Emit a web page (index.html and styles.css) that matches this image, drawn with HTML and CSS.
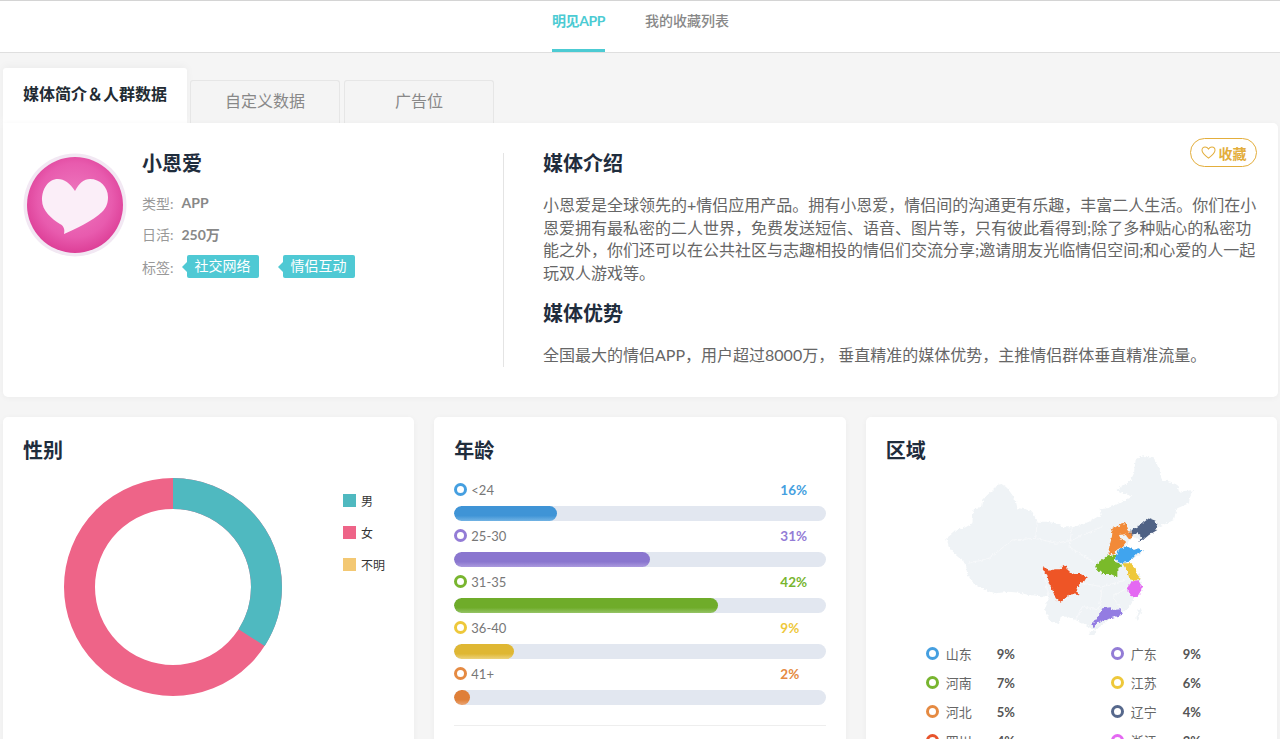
FILE: index.html
```html
<!DOCTYPE html>
<html lang="en">
<head>
    <meta charset="UTF-8">
    <meta name="viewport" content="width=device-width, initial-scale=1.0">
    <title>明见APP</title>
    <link rel="stylesheet" href="styles.css">
</head>
<body>

    <div class="topnav">
        <a class="topnav-item active">明见APP</a>
        <a class="topnav-item">我的收藏列表</a>
    </div>

    <div class="page">
        <div class="tabs">
            <div class="tab active">媒体简介＆人群数据</div>
            <div class="tab tab-custom">自定义数据</div>
            <div class="tab tab-ads">广告位</div>
        </div>

        <div class="media-card">
            <div class="media-info">
                <svg class="avatar" viewBox="0 0 104 104">
                    <defs>
                        <radialGradient id="avatarBg" cx="50%" cy="45%" r="55%">
                            <stop offset="0%" stop-color="#ee7cc0"/>
                            <stop offset="70%" stop-color="#e85bae"/>
                            <stop offset="100%" stop-color="#dd3f97"/>
                        </radialGradient>
                    </defs>
                    <circle cx="52" cy="52" r="51.5" fill="#f2e8f3"/>
                    <circle cx="52" cy="52" r="48" fill="url(#avatarBg)"/>
                    <path d="M52 38 C47 30 41 26 35 26 C25 26 19 36 19 47 C19 58 29 66 37 71 C41 73 42 77 41 81 C52 76 70 68 79 59 C84 54 85 49 85 44 C85 34 77 26 67 26 C61 26 56 30 52 38 Z" fill="#fbeef8"/>
                </svg>
                <div class="media-meta">
                    <h2 class="media-name">小恩爱</h2>
                    <div class="meta-row"><span class="meta-label">类型:</span><strong>APP</strong></div>
                    <div class="meta-row"><span class="meta-label">日活:</span><strong>250万</strong></div>
                    <div class="meta-row meta-tags">
                        <span class="meta-label">标签:</span>
                        <span class="tag">社交网络</span>
                        <span class="tag">情侣互动</span>
                    </div>
                </div>
            </div>
            <div class="media-desc">
                <h2>媒体介绍</h2>
                <p>小恩爱是全球领先的+情侣应用产品。拥有小恩爱，情侣间的沟通更有乐趣，丰富二人生活。你们在小恩爱拥有最私密的二人世界，免费发送短信、语音、图片等，只有彼此看得到;除了多种贴心的私密功能之外，你们还可以在公共社区与志趣相投的情侣们交流分享;邀请朋友光临情侣空间;和心爱的人一起玩双人游戏等。</p>
                <h2>媒体优势</h2>
                <p>全国最大的情侣APP，用户超过8000万， 垂直精准的媒体优势，主推情侣群体垂直精准流量。</p>
            </div>
            <a class="fav-btn">
                <svg viewBox="0 0 16 14" width="15" height="13"><path d="M8 13 C4 10 1 7.500 1 4.500 C1 2.500 2.500 1 4.300 1 C5.800 1 7.200 1.900 8 3.200 C8.800 1.900 10.200 1 11.700 1 C13.500 1 15 2.500 15 4.500 C15 7.500 12 10 8 13 Z" fill="none" stroke="#e3ae3c" stroke-width="1.100"/></svg>
                收藏
            </a>
        </div>

        <div class="stats">
            <div class="stat-card">
                <h3>性别</h3>
                <div class="gender">
                    <svg class="donut" viewBox="0 0 220 220">
                        <circle cx="110" cy="110" r="93.500" fill="none" stroke="#ee6488" stroke-width="31"/>
                        <circle cx="110" cy="110" r="93.500" fill="none" stroke="#4fb9c0" stroke-width="31" stroke-dasharray="200 587.500" transform="rotate(-90 110 110)"/>
                    </svg>
                    <ul class="gender-legend">
                        <li><i class="swatch swatch-male"></i>男</li>
                        <li><i class="swatch swatch-female"></i>女</li>
                        <li><i class="swatch swatch-unknown"></i>不明</li>
                    </ul>
                </div>
            </div>

            <div class="stat-card">
                <h3>年龄</h3>
                <div class="age-list">
                    <div class="age-row age-blue">
                        <div class="age-head"><i class="ring"></i><span class="age-name">&lt;24</span><b>16%</b></div>
                        <div class="bar"><div class="bar-fill" style="width: 103px"></div></div>
                    </div>
                    <div class="age-row age-purple">
                        <div class="age-head"><i class="ring"></i><span class="age-name">25-30</span><b>31%</b></div>
                        <div class="bar"><div class="bar-fill" style="width: 196px"></div></div>
                    </div>
                    <div class="age-row age-green">
                        <div class="age-head"><i class="ring"></i><span class="age-name">31-35</span><b>42%</b></div>
                        <div class="bar"><div class="bar-fill" style="width: 264px"></div></div>
                    </div>
                    <div class="age-row age-yellow">
                        <div class="age-head"><i class="ring"></i><span class="age-name">36-40</span><b>9%</b></div>
                        <div class="bar"><div class="bar-fill" style="width: 60px"></div></div>
                    </div>
                    <div class="age-row age-orange">
                        <div class="age-head"><i class="ring"></i><span class="age-name">41+</span><b>2%</b></div>
                        <div class="bar"><div class="bar-fill" style="width: 16px"></div></div>
                    </div>
                </div>
                <div class="age-line"></div>
            </div>

            <div class="stat-card">
                <h3>区域</h3>
                <svg class="map" viewBox="0 0 1230 585">
                    <defs>
                        <filter id="rough" x="-5%" y="-5%" width="110%" height="110%">
                            <feTurbulence type="fractalNoise" baseFrequency="0.12" numOctaves="2" seed="4"/>
                            <feDisplacementMap in="SourceGraphic" scale="12" xChannelSelector="R" yChannelSelector="G"/>
                        </filter>
                    </defs>
                    <g filter="url(#rough)">
                        <path fill="#eff3f6" d="M232 295 L245 285 L262 270 L290 262 L310 250 L312 225 L315 205 L340 200 L342 180 L352 168 L378 145 L385 135 L398 132 L415 145 L430 165 L440 180 L445 205 L470 208 L490 215 L505 245 L535 245 L560 250 L585 262 L610 262 L635 255 L660 245 L695 225 L692 208 L715 205 L740 195 L770 180 L790 170 L760 158 L742 150 L765 135 L785 120 L795 100 L798 75 L800 60 L815 50 L830 48 L850 55 L860 60 L870 90 L880 120 L905 125 L925 135 L930 155 L972 150 L962 175 L960 190 L925 205 L918 225 L915 240 L860 265 L830 290 L815 300 L790 290 L770 320 L825 335 L770 370 L790 380 L815 410 L820 450 L800 470 L785 495 L770 510 L755 525 L725 535 L700 555 L680 570 L650 555 L620 540 L595 530 L575 530 L570 552 L545 545 L525 510 L540 470 L510 468 L480 465 L450 458 L420 455 L380 460 L355 452 L330 440 L310 425 L295 405 L290 370 L260 345 L240 320 Z"/>
                        <path fill="#eff3f6" d="M812 503 L818 510 L806 542 L799 535 Z M658 578 L670 570 L682 574 L676 585 L660 585 Z"/>
                        <path fill="none" stroke="#fafbfc" stroke-width="2" d="M295 370 L360 355 L430 300 L500 295 L560 310 L610 300 M500 295 L505 245 M610 262 L600 320 L640 345 L680 372 M540 470 L520 385 M640 430 L700 440 L770 420 M700 440 L690 510 M620 540 L640 500 L690 510 M760 510 L730 470 L773 445 M610 300 L700 260"/>
                        <path fill="#ee5426" d="M520 380 L532 385 L538 392 L558 388 L572 388 L583 375 L595 385 L602 398 L618 402 L635 402 L653 412 L645 425 L632 432 L622 442 L628 465 L610 463 L600 465 L588 475 L575 488 L560 475 L550 450 L540 430 L535 405 L525 395 Z"/>
                        <path fill="#7aba2a" d="M680 373 L718 345 L738 348 L738 365 L760 375 L745 387 L745 412 L725 402 L700 402 L685 390 Z"/>
                        <path fill="#f28a38" d="M725 265 L745 260 L760 248 L772 252 L778 270 L792 287 L780 298 L768 283 L750 285 L755 298 L772 305 L760 320 L742 330 L738 345 L718 340 L722 315 L728 295 L730 280 Z"/>
                        <path fill="#40a4ee" d="M738 355 L750 328 L772 318 L795 330 L808 325 L825 332 L805 340 L782 365 L750 370 Z"/>
                        <path fill="#506285" d="M785 270 L805 260 L820 250 L840 235 L860 242 L865 270 L840 285 L822 300 L810 305 L818 290 L805 280 L785 285 Z"/>
                        <path fill="#eec83a" d="M760 370 L785 370 L800 385 L805 405 L815 415 L800 422 L782 418 L775 395 Z"/>
                        <path fill="#e468f2" d="M785 425 L810 420 L820 445 L805 470 L790 472 L775 450 Z"/>
                        <path fill="#937ce2" d="M700 505 L725 502 L732 510 L755 508 L758 525 L735 532 L700 542 L682 552 L675 565 L670 552 L690 525 Z"/>
                    </g>
                </svg>
                <ul class="region-list">
                    <li><i class="ring ring-blue"></i><span>山东</span><b>9%</b></li>
                    <li><i class="ring ring-purple"></i><span>广东</span><b>9%</b></li>
                    <li><i class="ring ring-green"></i><span>河南</span><b>7%</b></li>
                    <li><i class="ring ring-yellow"></i><span>江苏</span><b>6%</b></li>
                    <li><i class="ring ring-orange"></i><span>河北</span><b>5%</b></li>
                    <li><i class="ring ring-navy"></i><span>辽宁</span><b>4%</b></li>
                    <li><i class="ring ring-red"></i><span>四川</span><b>4%</b></li>
                    <li><i class="ring ring-pink"></i><span>浙江</span><b>3%</b></li>
                </ul>
            </div>
        </div>
    </div>

</body>
</html>
```

FILE: styles.css
```css
html, body {
    margin: 0;
    height: 739px;
    overflow: hidden;
}
body {
    font-family: Lato, "Noto Sans CJK SC", sans-serif;
    background-color: #f5f5f5;
    color: #666;
}
h2, h3, p, ul {
    margin: 0;
    padding: 0;
}
ul {
    list-style-type: none;
}
i {
    display: block;
    flex: none;
}

.topnav {
    display: flex;
    justify-content: center;
    gap: 41px;
    height: 51px;
    background-color: #fff;
    border-top: 1px solid #d4d4d4;
    border-bottom: 1px solid #dfdfdf;
}
.topnav-item {
    font-size: 14px;
    font-weight: 500;
    line-height: 39px;
    color: #888;
    margin-right: -1px;
}
.topnav-item.active {
    font-weight: 700;
    letter-spacing: -0.400px;
    color: #4ccbd3;
    border-bottom: 3px solid #4ccbd3;
    height: 48px;
}

.page {
    padding: 15px 2px 0 3px;
}

.tabs {
    display: flex;
    align-items: flex-end;
    height: 55px;
}
.tab {
    box-sizing: border-box;
    width: 150px;
    height: 43px;
    font-size: 16px;
    line-height: 40px;
    text-align: center;
    color: #888;
    background-color: #f4f4f4;
    border: 1px solid #e6e6e6;
    border-bottom: 0;
    border-radius: 3px 3px 0 0;
}
.tab.active {
    width: 184px;
    height: 55px;
    font-weight: 700;
    line-height: 52px;
    color: #222b33;
    background-color: #fff;
    border: 0;
    box-shadow: 0 -2px 8px rgba(0, 0, 0, 0.04);
}
.tab-custom {
    margin-left: 3px;
}
.tab-ads {
    margin-left: 4px;
}

.media-card {
    position: relative;
    display: flex;
    height: 274px;
    background-color: #fff;
    border-radius: 0 5px 5px 5px;
    box-shadow: 0 1px 6px rgba(0, 0, 0, 0.04);
}
.media-info {
    display: flex;
    box-sizing: border-box;
    width: 501px;
    height: 214px;
    margin-top: 30px;
    padding-left: 20px;
    border-right: 1px solid #e4e4e4;
}
.avatar {
    width: 104px;
    height: 104px;
    flex: none;
}
.media-meta {
    margin-left: 15px;
}
.media-name {
    font-size: 20px;
    font-weight: 700;
    line-height: 24px;
    color: #1f2d3d;
    margin-bottom: 12px;
    margin-top: -2px;
}
.meta-row {
    display: flex;
    align-items: center;
    height: 31px;
    font-size: 14px;
    color: #888;
}
.meta-label {
    margin-right: 8px;
    color: #999;
}
.meta-tags {
    margin-top: 2px;
}
.meta-tags .meta-label {
    margin-right: 13px;
}
.tag {
    position: relative;
    height: 23px;
    padding: 0 8px;
    margin-right: 24px;
    line-height: 22px;
    color: #fff;
    background-color: #4fc9d4;
    border-radius: 2px;
}
.tag::before {
    content: "";
    position: absolute;
    left: -5px;
    top: 7px;
    border-top: 5px solid transparent;
    border-bottom: 5px solid transparent;
    border-right: 5px solid #4fc9d4;
}

.media-desc {
    flex: 1;
    padding: 26px 20px 0 39px;
}
.media-desc h2 {
    font-size: 20px;
    font-weight: 700;
    line-height: 29px;
    color: #1f2d3d;
}
.media-desc p {
    font-size: 16px;
    line-height: 22.700px;
    margin: 16px 0 14px;
}

.fav-btn {
    position: absolute;
    top: 15px;
    right: 21px;
    display: flex;
    align-items: center;
    justify-content: center;
    gap: 3px;
    box-sizing: border-box;
    width: 67px;
    height: 29px;
    font-size: 14px;
    font-weight: 700;
    color: #e3ae3c;
    border: 1px solid #e3ae3c;
    border-radius: 15px;
}

.stats {
    display: grid;
    grid-template-columns: repeat(3, minmax(0, 1fr));
    gap: 20px;
    margin: 20px 1px 0 0;
}
.stat-card {
    height: 400px;
    padding: 20px;
    box-sizing: border-box;
    background-color: #fff;
    border-radius: 5px;
    box-shadow: 0 1px 6px rgba(0, 0, 0, 0.04);
}
.stat-card h3 {
    font-size: 20px;
    font-weight: 700;
    line-height: 26px;
    color: #1f2d3d;
}

.gender {
    position: relative;
    padding-top: 14px;
}
.donut {
    display: block;
    width: 220px;
    height: 220px;
    margin-left: 40px;
}
.gender-legend {
    position: absolute;
    top: 21px;
    left: 320px;
    font-size: 12px;
    color: #333;
}
.gender-legend li {
    display: flex;
    align-items: center;
    gap: 5px;
    height: 32px;
}
.swatch {
    width: 13px;
    height: 13px;
}
.swatch-male {
    background-color: #4fb9c0;
}
.swatch-female {
    background-color: #ee6488;
}
.swatch-unknown {
    background-color: #f3c873;
}

.ring {
    box-sizing: border-box;
    width: 13px;
    height: 13px;
    border: 3px solid #999;
    border-radius: 50%;
}
.ring-blue { border-color: #459fe0; }
.ring-purple { border-color: #937cd6; }
.ring-green { border-color: #78b52f; }
.ring-yellow { border-color: #eec83a; }
.ring-orange { border-color: #e58a42; }
.ring-navy { border-color: #56688c; }
.ring-red { border-color: #e8542c; }
.ring-pink { border-color: #e468f2; }

.age-list {
    margin-top: 12px;
}
.age-row {
    height: 46px;
}
.age-head {
    display: flex;
    align-items: center;
    box-sizing: border-box;
    height: 31px;
    padding-bottom: 2px;
    font-size: 13px;
}
.age-name {
    margin-left: 4px;
    color: #777;
}
.age-head b {
    position: absolute;
    margin-left: 326px;
    font-size: 13.500px;
}
.bar {
    height: 15px;
    background-color: #e2e7f0;
    border-radius: 8px;
    overflow: hidden;
}
.bar-fill {
    height: 100%;
    border-radius: 8px;
}
.age-blue .ring { border-color: #459fe0; }
.age-blue b { color: #459fe0; }
.age-blue .bar-fill { background: linear-gradient(#3f94d6 65%, #72b3e4); }
.age-purple .ring { border-color: #937cd6; }
.age-purple b { color: #937cd6; }
.age-purple .bar-fill { background: linear-gradient(#8a76cf 65%, #ab9ade); }
.age-green .ring { border-color: #78b52f; }
.age-green b { color: #78b52f; }
.age-green .bar-fill { background: linear-gradient(#6fac2a 65%, #95c466); }
.age-yellow .ring { border-color: #eec83a; }
.age-yellow b { color: #eec83a; }
.age-yellow .bar-fill { background: linear-gradient(#dfb733 65%, #ecd27c); }
.age-orange .ring { border-color: #e58a42; }
.age-orange b { color: #e58a42; }
.age-orange .bar-fill { background: linear-gradient(#df7f38 65%, #eba777); }
.age-line {
    height: 1px;
    margin-top: 20px;
    background-color: #eee;
}

.map {
    display: block;
    width: 410px;
    height: 195px;
    margin: -23px 0 0 -17px;
}
.region-list {
    display: grid;
    grid-template-columns: 185px 100px;
    padding-left: 40px;
    margin-top: 4px;
}
.region-list li {
    display: flex;
    align-items: center;
    height: 29px;
    font-size: 13px;
    color: #666;
}
.region-list span {
    width: 51px;
    margin-left: 7px;
}
.region-list li:nth-child(even) span {
    width: 52px;
}
.region-list b {
    color: #555;
}
```
